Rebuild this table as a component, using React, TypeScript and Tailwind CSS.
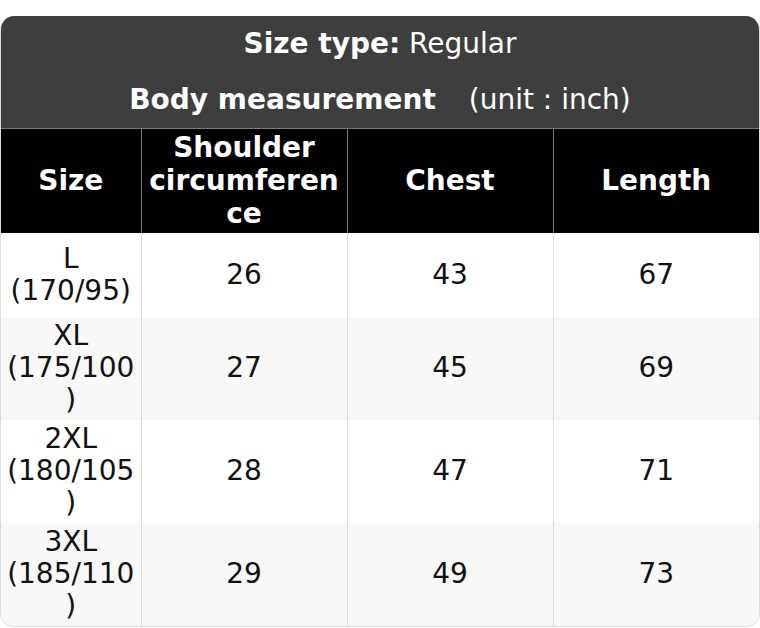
import React from "react";

const rows = [
  { size: "L (170/95)", s: "26", c: "43", l: "67", h: "h-[84px]", bg: "bg-white" },
  { size: "XL (175/100)", s: "27", c: "45", l: "69", h: "h-[103px]", bg: "bg-[#f8f8f8]" },
  { size: "2XL (180/105)", s: "28", c: "47", l: "71", h: "h-[103px]", bg: "bg-white" },
  { size: "3XL (185/110)", s: "29", c: "49", l: "73", h: "h-[103px]", bg: "bg-[#f8f8f8]" },
];

export default function App() {
  return (
    <div
      className="w-[760px] h-[628px] bg-white pt-[16px]"
      style={{ fontFamily: '"DejaVu Sans", sans-serif' }}
    >
      <div className="rounded-[14px] overflow-hidden border border-[#dcdcdc] border-t-0 text-[28px]">
        <div className="bg-[#3e3e3e] text-white text-center leading-[32px]">
          <div className="py-[12px]">
            <span className="font-bold">Size type:</span> Regular
          </div>
          <div className="py-[12px]">
            <span className="font-bold">Body measurement</span>
            <span className="ml-[33px]">(unit : inch)</span>
          </div>
        </div>
        <table className="w-full table-fixed border-collapse">
          <colgroup>
            <col className="w-[140px]" />
            <col className="w-[206px]" />
            <col className="w-[206px]" />
            <col />
          </colgroup>
          <thead>
            <tr className="h-[104px] bg-black text-white font-bold leading-[33px]">
              <th className="border-t border-[#7a7a7a] px-[6px] [overflow-wrap:anywhere]">Size</th>
              <th className="border-t border-l border-[#7a7a7a] px-[6px] [overflow-wrap:anywhere]">
                Shoulder circumference
              </th>
              <th className="border-t border-l border-[#7a7a7a] px-[6px] [overflow-wrap:anywhere]">Chest</th>
              <th className="border-t border-l border-[#7a7a7a] px-[6px] [overflow-wrap:anywhere]">Length</th>
            </tr>
          </thead>
          <tbody className="text-[#111] leading-[32px]">
            {rows.map((r) => (
              <tr key={r.size} className={`${r.h} ${r.bg}`}>
                <td className="px-[6px] text-center [overflow-wrap:anywhere]">{r.size}</td>
                <td className="border-l border-[#dcdcdc] px-[6px] text-center">{r.s}</td>
                <td className="border-l border-[#dcdcdc] px-[6px] text-center">{r.c}</td>
                <td className="border-l border-[#dcdcdc] px-[6px] text-center">{r.l}</td>
              </tr>
            ))}
          </tbody>
        </table>
      </div>
    </div>
  );
}
